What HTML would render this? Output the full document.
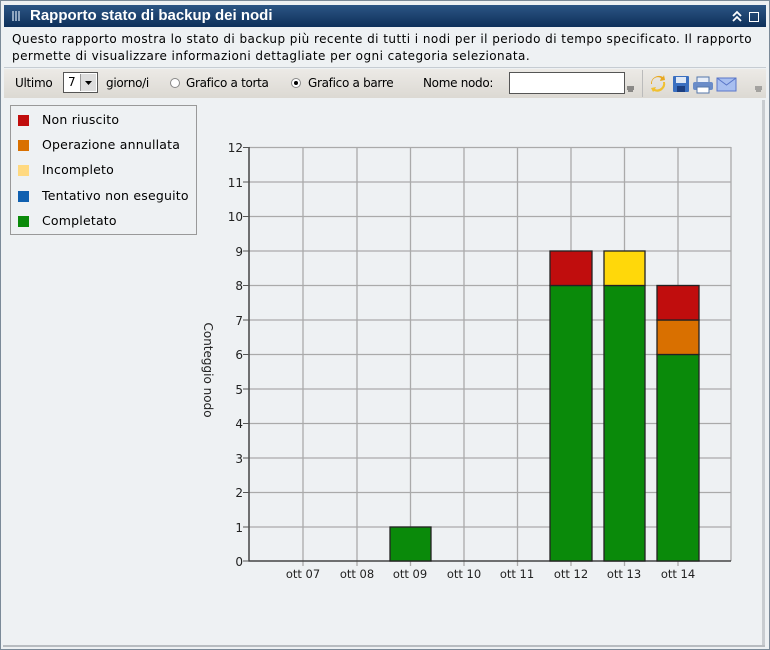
<!DOCTYPE html>
<html><head><style>
body{margin:0;width:770px;height:650px;background:#fff;overflow:hidden;font-family:"DejaVu Sans",Verdana,sans-serif;}
#win{position:absolute;left:0;top:0;width:768px;height:648px;border:1px solid #7b8a98;background:#eef1f3;}
#title{position:absolute;left:3px;top:4px;width:762px;height:22px;background:linear-gradient(#2c5584,#0e305a);color:#fff;font-weight:bold;font-size:15px;line-height:22px;font-family:"Liberation Sans",sans-serif;}
#title span{position:absolute;left:26px;top:0;}
#desc{position:absolute;left:3px;top:26px;width:762px;height:41px;background:#eef1f3;border-bottom:1px solid #c6ccd2;font-size:12px;line-height:17px;padding:4px 0 0 8px;box-sizing:border-box;font-family:"DejaVu Sans",sans-serif;letter-spacing:0.45px;}
#tb{position:absolute;left:3px;top:68px;width:762px;height:29px;background:linear-gradient(#eceae6,#dcd9d3);font-size:12px;letter-spacing:-0.3px;}
#tb .t{position:absolute;top:7px;}
.sel{position:absolute;left:59px;top:3px;width:35px;height:21px;background:#fff;border:1px solid #555;box-sizing:border-box;}
.rad{position:absolute;top:9px;width:10px;height:10px;border-radius:50%;border:1px solid #888;background:#fff;box-sizing:border-box;}
.inp{position:absolute;left:505px;top:3px;width:116px;height:22px;border:1px solid #555;background:#fff;box-sizing:border-box;}
#leg{position:absolute;left:9px;top:104px;width:185px;height:128px;border:1px solid #999;font-size:12.5px;letter-spacing:0.2px;}
#leg div{position:absolute;left:7px;height:14px;}
#leg i{position:absolute;left:0;top:0;width:11px;height:11px;}
#leg b{font-weight:normal;position:absolute;left:24px;top:-3px;white-space:nowrap;}
</style></head><body>
<div id="win">
<div id="title"><svg style="position:absolute;left:8px;top:6px" width="10" height="10"><g fill="#8fa6c0"><rect x="0" y="0" width="2" height="10"/><rect x="3" y="0" width="2" height="10"/><rect x="6" y="0" width="2" height="10"/></g></svg><span>Rapporto stato di backup dei nodi</span>
<svg style="position:absolute;left:728px;top:5px" width="30" height="13"><path d="M1 6l4-4 4 4M1 11l4-4 4 4" stroke="#fff" stroke-width="1.8" fill="none"/><rect x="17.5" y="2.5" width="9" height="9" stroke="#fff" fill="none"/></svg></div>
<div id="desc">Questo rapporto mostra lo stato di backup più recente di tutti i nodi per il periodo di tempo specificato. Il rapporto permette di visualizzare informazioni dettagliate per ogni categoria selezionata.</div>
<div id="tb">
<span class="t" style="left:11px">Ultimo</span>
<div class="sel"><span style="position:absolute;left:4px;top:2px">7</span><div style="position:absolute;right:1px;top:1px;width:15px;height:17px;background:#ddd;border-left:1px solid #999"><svg width="15" height="17"><path d="M4 7h7l-3.5 4z" fill="#000"/></svg></div></div>
<span class="t" style="left:102px">giorno/i</span>
<div class="rad" style="left:166px"></div><span class="t" style="left:182px">Grafico a torta</span>
<div class="rad" style="left:287px"><div style="position:absolute;left:2px;top:2px;width:4px;height:4px;border-radius:50%;background:#000"></div></div><span class="t" style="left:304px">Grafico a barre</span>
<span class="t" style="left:419px">Nome nodo:</span>
<div class="inp"></div>
<svg style="position:absolute;left:622px;top:15px" width="10" height="10"><path d="M1 3h7M1 5h7M2 7h5" stroke="#333"/></svg>
<div style="position:absolute;left:638px;top:1px;width:1px;height:27px;background:#bbb"></div>
<svg style="position:absolute;left:645px;top:5px" width="110" height="20">
<path d="M3 10a6 6 0 0 1 9-6l-1 3 5-1-1-5-1 2a8 8 0 0 0-12 7z" fill="#e8a820"/><path d="M14 8a6 6 0 0 1-8 7l1-2-5 1 2 4 1-1a8 8 0 0 0 11-9z" fill="#f0c030"/>
<rect x="24" y="2" width="16" height="16" rx="1" fill="#3a6fc0"/><rect x="27" y="3" width="10" height="6" fill="#dfe8f5"/><rect x="28" y="12" width="8" height="6" fill="#1c3f80"/>
<rect x="48" y="3" width="12" height="6" fill="#e8eef8" stroke="#5577aa"/><rect x="44" y="8" width="20" height="8" rx="2" fill="#6a8cc8"/><rect x="48" y="13" width="12" height="6" fill="#fff" stroke="#5577aa"/>
<rect x="68" y="4" width="19" height="13" fill="#a8bff0" stroke="#5a76c8"/><path d="M68 4l9.5 7 9.5-7" stroke="#5a76c8" fill="none"/>
</svg>
<svg style="position:absolute;left:750px;top:15px" width="10" height="10"><path d="M1 3h7M1 5h7M2 7h5" stroke="#666"/></svg>
</div>
<div id="leg">
<div style="top:9px"><i style="background:#c00d0d"></i><b>Non riuscito</b></div>
<div style="top:34px"><i style="background:#d97000"></i><b>Operazione annullata</b></div>
<div style="top:59px"><i style="background:#ffd980"></i><b>Incompleto</b></div>
<div style="top:85px"><i style="background:#1060b0"></i><b>Tentativo non eseguito</b></div>
<div style="top:110px"><i style="background:#0a8a0a"></i><b>Completato</b></div>
</div>
<svg style="position:absolute;left:-1px;top:-1px" width="770" height="650" font-family="DejaVu Sans,sans-serif" font-size="12">
<g stroke="#aaa" stroke-width="1.3">
<path d="M249 147.5H731M249 182H731M249 216.5H731M249 251H731M249 285.5H731M249 320H731M249 354.5H731M249 389H731M249 423.5H731M249 458H731M249 492.5H731M249 527H731"/>
<path d="M303 147V566M357 147V566M410.5 147V566M464 147V566M517.5 147V566M571 147V566M624.5 147V566M678 147V566M731 147V561"/>
</g>
<path d="M249 147V561H731" stroke="#444" stroke-width="1.5" fill="none"/>
<g stroke="#555"><path d="M243 147.5h6M243 182h6M243 216.5h6M243 251h6M243 285.5h6M243 320h6M243 354.5h6M243 389h6M243 423.5h6M243 458h6M243 492.5h6M243 527h6M243 561h6"/></g>
<g text-anchor="end" fill="#222"><text x="243" y="152">12</text><text x="243" y="187">11</text><text x="243" y="221">10</text><text x="243" y="256">9</text><text x="243" y="290">8</text><text x="243" y="325">7</text><text x="243" y="359">6</text><text x="243" y="394">5</text><text x="243" y="428">4</text><text x="243" y="463">3</text><text x="243" y="497">2</text><text x="243" y="532">1</text><text x="243" y="566">0</text></g>
<g text-anchor="middle" fill="#222" font-size="11.5"><text x="303" y="578">ott 07</text><text x="357" y="578">ott 08</text><text x="410" y="578">ott 09</text><text x="464" y="578">ott 10</text><text x="517" y="578">ott 11</text><text x="571" y="578">ott 12</text><text x="624" y="578">ott 13</text><text x="678" y="578">ott 14</text></g>
<text transform="translate(204,370) rotate(90)" text-anchor="middle" fill="#222">Conteggio nodo</text>
<g stroke="#222" stroke-width="1.3">
<rect x="390" y="527" width="41" height="34" fill="#0a8a0a"/>
<rect x="550" y="285.5" width="42" height="275.5" fill="#0a8a0a"/><rect x="550" y="251" width="42" height="34.5" fill="#c00d0d"/>
<rect x="604" y="285.5" width="41" height="275.5" fill="#0a8a0a"/><rect x="604" y="251" width="41" height="34.5" fill="#ffd80a"/>
<rect x="657" y="354.5" width="42" height="206.5" fill="#0a8a0a"/><rect x="657" y="320" width="42" height="34.5" fill="#d97000"/><rect x="657" y="285.5" width="42" height="34.5" fill="#c00d0d"/>
</g>
<rect x="762" y="100" width="3" height="545" fill="#c8ccd0"/>
<rect x="3" y="645" width="762" height="2" fill="#b8bcc0"/>
</svg>
</div>
</body></html>
